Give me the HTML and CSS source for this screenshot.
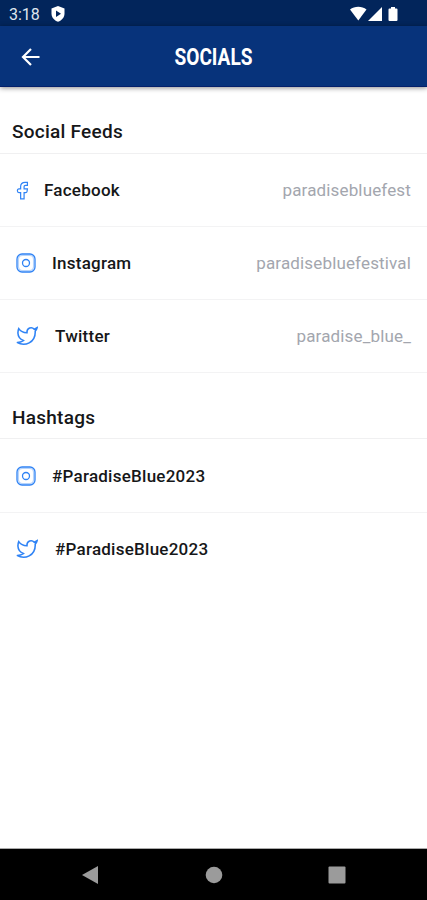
FILE: index.html
```html
<!DOCTYPE html>
<html lang="en">
<head>
    <meta charset="UTF-8">
    <meta name="viewport" content="width=device-width, initial-scale=1.0">
    <title>Socials</title>
    <link rel="stylesheet" href="styles.css">
</head>
<body>
<svg class="sprite" width="0" height="0">
    <symbol id="instagram" viewBox="0 0 20 20">
        <rect x="1" y="1" width="18" height="18" rx="5"/>
        <rect x="2.400" y="2.400" width="15.200" height="15.200" rx="4" opacity="0.35"/>
        <circle cx="10" cy="10" r="3.500"/>
    </symbol>
    <symbol id="twitter" viewBox="0 0 24 24">
        <path d="M23 3a10.9 10.9 0 0 1-3.14 1.53 4.48 4.48 0 0 0-7.86 3v1A10.66 10.66 0 0 1 3 4s-4 9 5 13a11.64 11.64 0 0 1-7 2c9 5 20 0 20-11.5a4.5 4.5 0 0 0-.08-.83A7.72 7.72 0 0 0 23 3z"/>
    </symbol>
</svg>

<div class="status-bar">
    <span class="time">3:18</span>
    <svg class="shield" width="14" height="16" viewBox="0 0 14 16">
        <path fill="#fff" d="M7 0l6.5 2.4v5.2c0 3.8-2.6 6.9-6.5 8.2C3.100 14.500.5 11.400.5 7.600V2.400z"/>
        <path fill="#02255b" d="M5 4.500l5 3.200-5 3.200z"/>
    </svg>
    <svg class="signals" width="50" height="16" viewBox="0 0 50 16">
        <path d="M0 3.500C4.500-.3 12-.3 16.500 3.500L8.300 14.500z"/>
        <path d="M32 1v14H18z"/>
        <path d="M41 1h4v1.500h1.500q1 0 1 1V14q0 1-1 1h-7q-1 0-1-1V3.500q0-1 1-1H41z"/>
    </svg>
</div>

<header class="app-bar">
    <svg class="back" width="20" height="20" viewBox="0 0 20 20">
        <path d="M18.500 10H2M10 2L2 10l8 8"/>
    </svg>
    <h1>SOCIALS</h1>
</header>

<main>
    <h2>Social Feeds</h2>
    <ul>
        <li>
            <svg class="icon facebook" viewBox="0 0 14 20">
                <path d="M12.300 1.200H9.800C6.700 1.200 5 3 5 5.700V8.200H3.200Q1.500 8.200 1.500 10.200T3.200 12.200H5V19h3.700v-6.800h1.800q1.200 0 1.400-1.200l.4-2.800H8.700V6c0-1 .5-1.500 1.500-1.500h2.100z"/>
            </svg>
            <span class="name">Facebook</span>
            <span class="handle">paradisebluefest</span>
        </li>
        <li>
            <svg class="icon instagram"><use href="#instagram"/></svg>
            <span class="name">Instagram</span>
            <span class="handle">paradisebluefestival</span>
        </li>
        <li>
            <svg class="icon twitter"><use href="#twitter"/></svg>
            <span class="name">Twitter</span>
            <span class="handle">paradise_blue_</span>
        </li>
    </ul>

    <h2 class="hashtags-title">Hashtags</h2>
    <ul class="hashtags">
        <li>
            <svg class="icon instagram"><use href="#instagram"/></svg>
            <span class="name">#ParadiseBlue2023</span>
        </li>
        <li>
            <svg class="icon twitter"><use href="#twitter"/></svg>
            <span class="name">#ParadiseBlue2023</span>
        </li>
    </ul>
</main>

<nav class="nav-bar">
    <svg width="18" height="20" viewBox="0 0 18 20"><path d="M17 1v18L1 10z"/></svg>
    <svg width="18" height="20" viewBox="0 0 18 20"><circle cx="9" cy="10" r="8.300"/></svg>
    <svg width="18" height="20" viewBox="0 0 18 20"><rect x=".5" y="1.500" width="17" height="17" rx="1"/></svg>
</nav>
</body>
</html>
```

FILE: styles.css
```css
* {
  box-sizing: border-box;
}

body {
  font-family: Roboto, Arial, sans-serif;
  background-color: #fff;
  color: #161719;
  margin: 0;
  display: flex;
  flex-direction: column;
  height: 100vh;
}

.sprite {
  display: none;
}

.status-bar {
  display: flex;
  align-items: center;
  height: 26px;
  padding: 2px 27px 0 9px;
  background-color: #02255b;
  color: #dfe5ee;
}

.time {
  width: 42px;
  font-size: 16px;
}

.signals {
  margin-left: auto;
  fill: #fff;
}

.app-bar {
  display: grid;
  grid-template-columns: 60px 1fr 60px;
  align-items: center;
  height: 61px;
  padding-top: 2px;
  background-color: #07337b;
  border-bottom: 1px solid #04206b;
  box-shadow: 0 1px 5px rgba(0, 0, 0, 0.45);
}

.back {
  margin-left: 21px;
  fill: none;
  stroke: #fff;
  stroke-width: 2.2;
}

h1 {
  margin: 0;
  color: #fff;
  font-size: 23px;
  font-weight: 700;
  text-align: center;
  transform: scaleX(0.83);
}

main {
  flex: 1;
}

h2 {
  height: 67px;
  margin: 0;
  padding: 32px 12px 0;
  border-bottom: 1px solid #f0f0f1;
  font-size: 19px;
  font-weight: 500;
  line-height: 25px;
  letter-spacing: 0.25px;
}

.hashtags-title {
  height: 66px;
}

ul {
  margin: 0;
  padding: 0;
  list-style: none;
}

li {
  display: flex;
  align-items: center;
  height: 73px;
  padding: 0 16px;
  border-bottom: 1px solid #f3f3f4;
}

.hashtags li {
  height: 74px;
}

.hashtags li:last-child {
  height: 71px;
  border-bottom: none;
}

.icon {
  fill: none;
  stroke: #2f83f5;
  stroke-width: 1.3;
}

.facebook {
  width: 13px;
  height: 19px;
  margin-right: 15px;
}

.instagram {
  width: 20px;
  height: 20px;
  margin-right: 16px;
}

.twitter {
  width: 22px;
  height: 22px;
  margin-right: 17px;
  stroke-width: 1.7;
}

.name {
  font-size: 17px;
  font-weight: 500;
  letter-spacing: 0.25px;
}

.handle {
  margin-left: auto;
  color: #a3a6ae;
  font-size: 17px;
  letter-spacing: 0.15px;
}

.nav-bar {
  display: flex;
  align-items: center;
  justify-content: space-between;
  height: 52px;
  padding: 0 81px;
  background-color: #000;
  border-top: 1px solid #aaa;
  fill: #9b9b9b;
}
```
